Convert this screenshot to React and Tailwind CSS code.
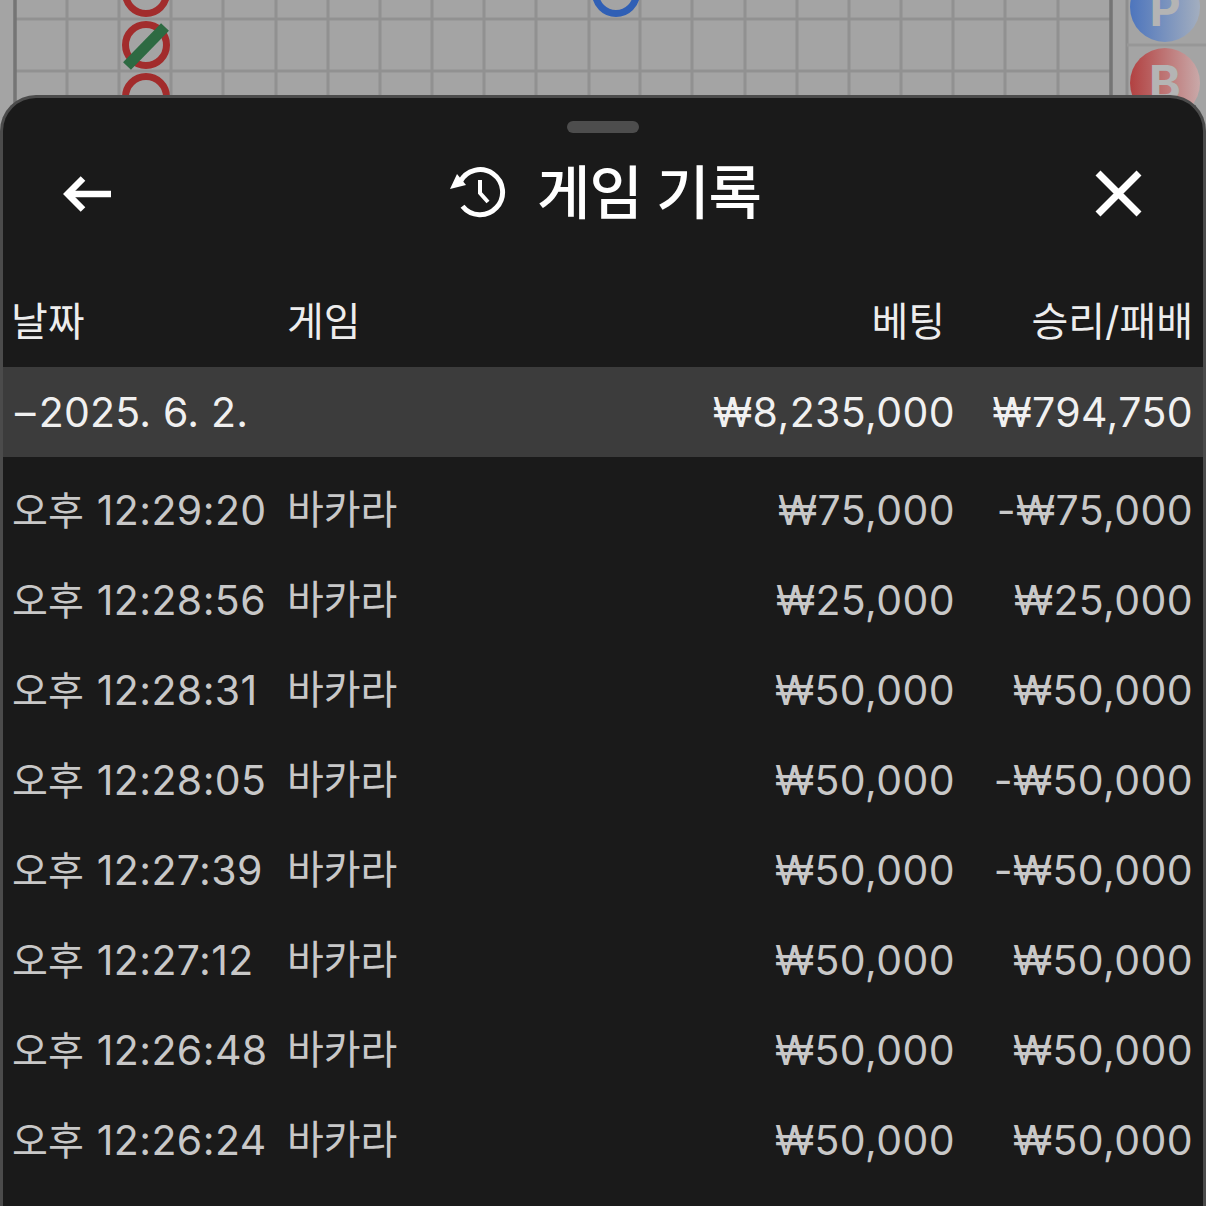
const rows = [
  { time: "12:29:20", bet: "₩75,000", result: "-₩75,000" },
  { time: "12:28:56", bet: "₩25,000", result: "₩25,000" },
  { time: "12:28:31", bet: "₩50,000", result: "₩50,000" },
  { time: "12:28:05", bet: "₩50,000", result: "-₩50,000" },
  { time: "12:27:39", bet: "₩50,000", result: "-₩50,000" },
  { time: "12:27:12", bet: "₩50,000", result: "₩50,000" },
  { time: "12:26:48", bet: "₩50,000", result: "₩50,000" },
  { time: "12:26:24", bet: "₩50,000", result: "₩50,000" },
];

const vLines = [67, 119, 171, 223, 276, 328, 380, 432, 484, 536, 589, 640, 692, 745, 797, 849, 901, 953, 1005, 1058];

// the road board behind the sheet
const Board = () => (
  <svg width="1206" height="140" viewBox="0 0 1206 140" className="block">
    <rect width="1206" height="140" fill="#a4a4a4" />
    {vLines.map((x) => (
      <line key={x} x1={x} x2={x} y1="0" y2="140" stroke="#919191" strokeWidth="3" />
    ))}
    <line x1="16" x2="1111" y1="19" y2="19" stroke="#919191" strokeWidth="3" />
    <line x1="16" x2="1111" y1="71" y2="71" stroke="#919191" strokeWidth="3" />
    <line x1="15" x2="15" y1="0" y2="140" stroke="#757575" strokeWidth="3.5" />
    <line x1="1111" x2="1111" y1="0" y2="140" stroke="#757575" strokeWidth="3.5" />
    <line x1="1127" x2="1127" y1="0" y2="140" stroke="#8e8e8e" strokeWidth="3" />
    <line x1="1127" x2="1206" y1="45" y2="45" stroke="#979797" strokeWidth="3" />

    <circle cx="146" cy="-7" r="20.5" fill="none" stroke="#a22c2c" strokeWidth="7" />
    <circle cx="146" cy="45" r="20.5" fill="none" stroke="#a22c2c" strokeWidth="7" />
    <line x1="165" x2="127" y1="27" y2="66" stroke="#2d6a42" strokeWidth="11" />
    <circle cx="146" cy="97" r="20.5" fill="none" stroke="#a22c2c" strokeWidth="7" />
    <circle cx="616" cy="-7" r="20.5" fill="none" stroke="#2f5fb5" strokeWidth="7" />

    <defs>
      <linearGradient id="blueFade" x1="0" x2="1" y1="0" y2="0">
        <stop offset="0" stopColor="#4d75bd" />
        <stop offset="1" stopColor="#a3aebf" />
      </linearGradient>
      <linearGradient id="redFade" x1="0" x2="1" y1="0" y2="0">
        <stop offset="0" stopColor="#b24141" />
        <stop offset="1" stopColor="#c9a9a9" />
      </linearGradient>
    </defs>
    <circle cx="1165" cy="7" r="35" fill="url(#blueFade)" />
    <circle cx="1165" cy="83" r="35" fill="url(#redFade)" />
    <text x="1165" y="26" textAnchor="middle" fontFamily="Inter, sans-serif" fontWeight="700" fontSize="48" fill="#b4b4b4">
      P
    </text>
    <text x="1165" y="100" textAnchor="middle" fontFamily="Inter, sans-serif" fontWeight="700" fontSize="48" fill="#b4b4b4">
      B
    </text>
  </svg>
);

const HistoryIcon = () => (
  <svg width="56" height="56" viewBox="0 0 56 56" fill="none" stroke="#fff" strokeWidth="5">
    <path d="M10 17 A22.5 22.5 0 1 1 12.5 41.2" />
    <path d="M0 24 L7 9 L16 20 Z" fill="#fff" stroke="none" />
    <path d="M30 15 V28 L38 37" strokeWidth="4" />
  </svg>
);

const BackIcon = () => (
  <svg width="48" height="40" viewBox="0 0 48 40" fill="none" stroke="#fff" strokeWidth="6.5">
    <path d="M48 21 H6" />
    <path d="M20 5.5 L4.6 21 L20 36.5" />
  </svg>
);

const CloseIcon = () => (
  <svg width="47" height="47" viewBox="0 0 47 47" fill="none" stroke="#fff" strokeWidth="7">
    <path d="M3 3 L44 44 M44 3 L3 44" />
  </svg>
);

const App = () => {
  return (
    <div
      className="relative h-[1206px] w-[1206px] overflow-hidden bg-[#a4a4a4]"
      style={{ fontFamily: "Inter, 'Noto Sans CJK KR', sans-serif" }}
    >
      <Board />

      {/* bottom sheet */}
      <div className="absolute left-0 right-0 top-[95px] bottom-[-40px] rounded-t-[36px] border-[3px] border-b-0 border-[#4b4b4b] bg-[#1a1a1a]">
        <div className="mx-auto mt-[23px] h-[12px] w-[72px] rounded-full bg-[#4d4d4d]" />

        <div className="mt-[20px] flex h-[80px] items-center justify-between pl-[60px] pr-[61px] text-white">
          <button>
            <BackIcon />
          </button>
          <div className="ml-[5px] flex items-center gap-[31px]">
            <HistoryIcon />
            <span className="text-[58px] font-medium leading-none tracking-[-1px]">게임 기록</span>
          </div>
          <button>
            <CloseIcon />
          </button>
        </div>

        {/* table header */}
        <div className="mt-[44px] grid h-[90px] grid-cols-[284px_1fr_248px_248px] items-center text-[40px] leading-none text-[#ededed]">
          <div className="pl-[8px]">날짜</div>
          <div>게임</div>
          <div className="pr-[10px] text-right">베팅</div>
          <div className="pr-[10px] text-right">승리/패배</div>
        </div>

        {/* day group */}
        <div className="mb-[8px] grid h-[90px] grid-cols-[1fr_248px_248px] items-center bg-[#3c3c3c] text-[41px] leading-none tracking-[0.4px] text-[#f0f0f0]">
          <div className="flex items-center pl-[12px] tracking-[0.2px]">
            <span className="mr-[3px]">–</span>
            <span>2025. 6. 2.</span>
          </div>
          <div className="text-right">₩8,235,000</div>
          <div className="pr-[10px] text-right">₩794,750</div>
        </div>

        {rows.map((r) => (
          <div
            key={r.time}
            className="grid h-[90px] grid-cols-[284px_1fr_248px_248px] items-center text-[41px] leading-none tracking-[0.4px] text-[#c8c8c8]"
          >
            <div className="flex items-center whitespace-nowrap pl-[9px]">
              <span className="mr-[13px] text-[39px] tracking-normal">오후</span>
              <span>{r.time}</span>
            </div>
            <div className="text-[40px] tracking-normal">바카라</div>
            <div className="text-right">{r.bet}</div>
            <div className="pr-[10px] text-right">{r.result}</div>
          </div>
        ))}
      </div>
    </div>
  );
};

export default App;
